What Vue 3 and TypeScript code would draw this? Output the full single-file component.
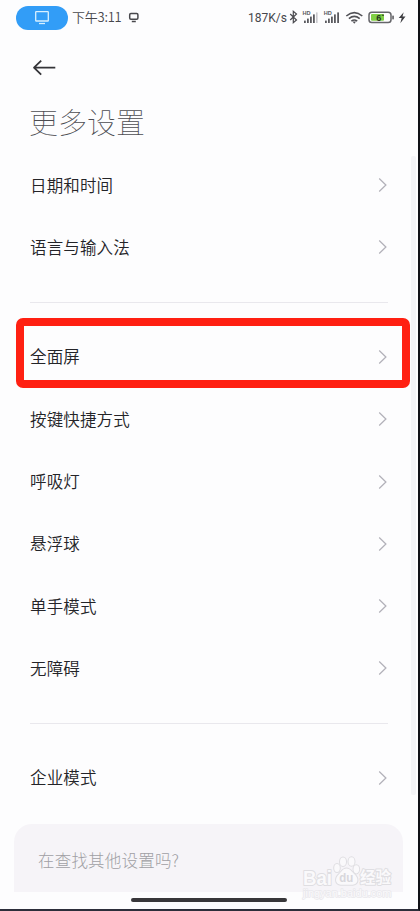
<script setup lang="ts">
interface Item {
  label: string
  highlighted?: boolean
}

const groups: Item[][] = [
  [{ label: '日期和时间' }, { label: '语言与输入法' }],
  [
    { label: '全面屏', highlighted: true },
    { label: '按键快捷方式' },
    { label: '呼吸灯' },
    { label: '悬浮球' },
    { label: '单手模式' },
    { label: '无障碍' },
  ],
  [{ label: '企业模式' }],
]
</script>

<template>
  <div class="screen">
    <header class="status">
      <span class="cast">
        <svg width="16" height="16" viewBox="0 0 16 16" fill="none" stroke="#d8f0ff" stroke-width="1.3">
          <rect x="1.7" y="1.6" width="12.6" height="9.4" rx="0.6" />
          <path d="M5 13.500h6" />
        </svg>
      </span>
      <span class="clock">下午3:11</span>
      <svg class="mini" width="12" height="12" viewBox="0 0 12 12" fill="none" stroke="#48484c" stroke-width="1.5">
        <rect x="1.700" y="1.500" width="8.200" height="5.800" rx="1.200" />
        <path d="M3.800 9.500h4" />
      </svg>
      <span class="speed">187K/s</span>
      <svg class="radios" width="124" height="20" viewBox="0 0 124 20">
        <path d="M2.200 6l6.300 6-3.200 2.800V3.200l3.200 2.800-6.300 6" fill="none" stroke="#4b4b50" stroke-width="1.200" />
        <g fill="#5a5a5f">
          <text x="14.500" y="6.600" class="hd">HD</text>
          <rect x="16" y="12.600" width="1.800" height="2.400" />
          <rect x="19" y="10.600" width="1.800" height="4.400" />
          <rect x="22" y="8.600" width="1.800" height="6.400" />
          <rect x="25" y="6.400" width="1.800" height="8.600" />
          <rect x="28" y="4.400" width="1.600" height="10.600" fill="#c9c9cd" />
          <text x="35.800" y="6.600" class="hd">HD</text>
          <rect x="37" y="12.600" width="1.800" height="2.400" />
          <rect x="40" y="10.600" width="1.800" height="4.400" />
          <rect x="43" y="8.600" width="1.800" height="6.400" />
          <rect x="46" y="6.400" width="1.800" height="8.600" />
          <rect x="49.200" y="4.400" width="1.800" height="10.600" />
        </g>
        <g fill="none" stroke="#515156" stroke-width="1.600">
          <path d="M58.300 8Q66.300 1.200 74.300 8" />
          <path d="M60.900 10.700Q66.300 6.200 71.700 10.700" />
          <path d="M63.400 13.200Q66.300 10.900 69.200 13.200" />
        </g>
        <path d="M64.500 13.500h3.600l-1.800 2.200z" fill="#515156" />
        <rect x="81" y="4.200" width="22" height="10.400" rx="2.800" fill="#fff" stroke="#65656a" stroke-width="1.500" />
        <rect x="83" y="6.100" width="13" height="6.600" rx="1" fill="#80cf45" />
        <rect x="104.300" y="7.400" width="1.500" height="4" rx="0.600" fill="#515156" />
        <text x="88.300" y="12.800" class="level">6</text>
        <path d="M93.800 7.200h2.200" stroke="#26331f" stroke-width="1" />
        <path d="M115.700 4.200l-5 5.900h3l-1.400 5.100 5.200-6.600h-3z" fill="#3d3d42" />
      </svg>
    </header>

    <div class="toolbar">
      <svg width="26" height="20" viewBox="0 0 26 20" fill="none" stroke="#343438" stroke-width="1.800" stroke-linejoin="round">
        <path d="M25.300 9.700H4M11.200 2.700L4 9.700l7.200 7" />
      </svg>
    </div>
    <h1 class="title">更多设置</h1>

    <main class="list">
      <section v-for="(group, i) in groups" :key="i" class="group">
        <div v-for="item in group" :key="item.label" class="row">
          <span class="label">{{ item.label }}</span>
          <svg width="10" height="16" viewBox="0 0 10 16" fill="none" stroke="#b2b1b9" stroke-width="1.250">
            <path d="M1.200 1.500L7.900 8l-6.700 6.500" />
          </svg>
          <i v-if="item.highlighted" class="marker"></i>
        </div>
      </section>
    </main>

    <footer class="search">在查找其他设置吗?</footer>
    <div class="home"></div>
    <div class="scrollbar"></div>

    <svg class="watermark" width="100" height="54" viewBox="0 0 100 54">
      <g fill="#faf9fb" stroke="#dfdee2" stroke-width="2" paint-order="stroke" stroke-linejoin="round">
        <text x="3" y="34.500" class="brand" textLength="29" lengthAdjust="spacingAndGlyphs">Bai</text>
        <ellipse cx="37" cy="18" rx="2.800" ry="4.100" />
        <ellipse cx="43" cy="11.700" rx="3" ry="4.300" />
        <ellipse cx="51.500" cy="11.500" rx="3" ry="4.300" />
        <ellipse cx="56.300" cy="19.300" rx="2.800" ry="4.100" />
        <path d="M46.500 18.500c-3.500 0-4.700 3-7.300 5.500-5 4.500-3.700 10.300 1.500 10.700h12c5.500-.4 6.500-6.200 1.500-10.700-2.800-2.500-4.200-5.500-7.700-5.500z" />
        <text x="60" y="33.300" class="cn" textLength="31" lengthAdjust="spacingAndGlyphs">经验</text>
        <text x="3" y="46.700" class="url" textLength="88.500" lengthAdjust="spacingAndGlyphs">jingyan.baidu.com</text>
      </g>
      <text x="39.300" y="32" class="du" textLength="14" lengthAdjust="spacingAndGlyphs">du</text>
    </svg>
  </div>
</template>

<style>
body {
  background: #fdfdfe;
  overflow: hidden;
}
</style>

<style scoped>
.screen {
  position: relative;
  box-sizing: border-box;
  width: 420px;
  height: 911px;
  display: flex;
  flex-direction: column;
  background: #fdfdfe;
  border-right: 2px solid #101116;
  border-bottom: 2px solid #2c2e3a;
  font-family: "Noto Sans CJK SC", sans-serif;
  color: #242428;
  overflow: hidden;
}
.status {
  height: 35px;
  flex: none;
  display: flex;
  align-items: center;
  padding-left: 16px;
  color: #47474c;
}
.cast {
  width: 52px;
  height: 24px;
  border-radius: 12px;
  background: #329df7;
  display: flex;
  align-items: center;
  justify-content: center;
}
.clock {
  margin-left: 4px;
  width: 50px;
  font-size: 13px;
  font-weight: 350;
  line-height: 18px;
  padding-bottom: 1px;
  letter-spacing: -0.25px;
  white-space: nowrap;
}
.mini {
  margin-left: 6px;
}
.speed {
  margin-left: 108px;
  width: 40px;
  font-family: Roboto, sans-serif;
  font-size: 12px;
  letter-spacing: 0;
  white-space: nowrap;
}
.radios {
  flex: none;
}
.hd {
  font: bold 5.6px "Liberation Sans", sans-serif;
}
.level {
  font: bold 9px "Liberation Sans", sans-serif;
  fill: #26331f;
}
.toolbar {
  height: 61.500px;
  flex: none;
  box-sizing: border-box;
  padding: 23px 0 0 30px;
}
.title {
  flex: none;
  height: 57.500px;
  margin: 0;
  padding-left: 29px;
  font-size: 29px;
  font-weight: 100;
  line-height: 48px;
  color: #4c4c51;
}
.group + .group {
  margin-top: 23px;
  padding-top: 24.200px;
  position: relative;
}
.group + .group::before {
  content: "";
  position: absolute;
  top: 0;
  left: 30px;
  right: 30px;
  height: 1px;
  background: #e9e8ed;
}
.row {
  position: relative;
  height: 62.300px;
  display: flex;
  align-items: center;
  justify-content: space-between;
  padding: 0 30px;
  font-size: 16.500px;
  font-weight: 350;
}
.label {
  letter-spacing: 0.150px;
  padding-bottom: 1px;
}
.marker {
  position: absolute;
  z-index: 1;
  box-sizing: border-box;
  left: 15.500px;
  right: 8.500px;
  top: -8px;
  height: 70px;
  border: 8px solid #ff2012;
  border-radius: 7px;
}
.search {
  flex: none;
  box-sizing: border-box;
  width: 389px;
  height: 68px;
  margin: auto 0 17px 14px;
  padding: 4px 24px 0;
  border-radius: 18px 18px 0 0;
  background: #f6f4f8;
  color: #a09fa4;
  font-size: 16.500px;
  font-weight: 300;
  letter-spacing: 0.200px;
  line-height: 64px;
}
.home {
  position: absolute;
  left: 131px;
  top: 898px;
  width: 156px;
  height: 4px;
  border-radius: 2px;
  background: #38373a;
}
.scrollbar {
  position: absolute;
  left: 411px;
  top: 156px;
  width: 5px;
  height: 639px;
  border-radius: 2px;
  background: #f4f4f7;
}
.watermark {
  position: absolute;
  left: 300px;
  top: 850px;
}
.brand {
  font: bold 20px "Liberation Sans", sans-serif;
}
.du {
  font: bold 13px "Liberation Sans", sans-serif;
  fill: #d8d7dc;
}
.cn {
  font: bold 15.500px "Noto Sans CJK SC", sans-serif;
}
.url {
  font: 10.500px "Liberation Sans", sans-serif;
  stroke: #e9e8ec;
  stroke-width: 1.500;
}
</style>
